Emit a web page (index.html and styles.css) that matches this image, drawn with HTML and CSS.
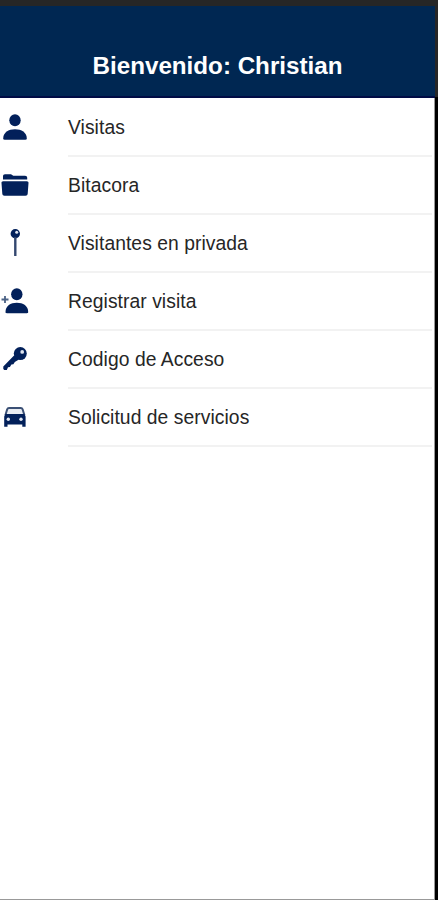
FILE: index.html
```html
<!DOCTYPE html>
<html lang="es">
<head>
    <meta charset="UTF-8">
    <meta name="viewport" content="width=device-width, initial-scale=1.0">
    <title>Bienvenido</title>
    <link rel="stylesheet" href="styles.css">
</head>
<body>
<div class="device">
    <div class="screen">
        <header class="header">
            <h1>Bienvenido: Christian</h1>
        </header>

        <ul class="menu">
            <li class="menu-item">
                <svg class="icon" viewBox="0 0 30 30">
                    <ellipse cx="15" cy="8.3" rx="5.7" ry="6"/>
                    <path d="M3.2 26.5C3.2 20.5 8.5 17.3 15 17.3s11.8 3.2 11.8 9.2c0 .8-.5 1.2-1.3 1.2h-21c-.8 0-1.3-.4-1.3-1.2z"/>
                </svg>
                <span class="label">Visitas</span>
            </li>
            <li class="menu-item">
                <svg class="icon" viewBox="0 0 30 30">
                    <path d="M3 9.4V6.2C3 4.9 3.8 4.2 5 4.2h6l2.3 1.6H25c1.4 0 2.2.8 2.2 2v1.6z"/>
                    <path d="M3.2 11.2h23.6c1.2 0 1.8.7 1.7 1.8l-.8 10.7c-.1 1.3-.9 2-2.2 2h-21c-1.3 0-2.1-.7-2.2-2L1.5 13c-.1-1.1.5-1.8 1.7-1.8z"/>
                </svg>
                <span class="label">Bitacora</span>
            </li>
            <li class="menu-item">
                <svg class="icon" viewBox="0 0 30 30">
                    <circle cx="15.3" cy="5.7" r="4.7"/>
                    <path class="stem" d="M15.3 9v19"/>
                    <circle class="hole" cx="16.7" cy="4.2" r="1.5"/>
                </svg>
                <span class="label">Visitantes en privada</span>
            </li>
            <li class="menu-item">
                <svg class="icon" viewBox="0 0 30 30">
                    <ellipse cx="16.8" cy="8.2" rx="5.7" ry="6"/>
                    <path d="M5.5 26C5.5 20 10.5 16.8 16.8 16.8S28.2 20 28.2 26c0 .8-.5 1.2-1.3 1.2H6.8c-.8 0-1.3-.4-1.3-1.2z"/>
                    <path class="plus" d="M5 10v7M1.500 13.500h7"/>
                </svg>
                <span class="label">Registrar visita</span>
            </li>
            <li class="menu-item">
                <svg class="icon" viewBox="0 0 30 30">
                    <circle cx="20.3" cy="9.6" r="6.5"/>
                    <path d="M14.300 11.300L3.300 22.600v2.500l1 .8h2.500l1.200-2.700 1.900-.3 1.500-2.400 2-.2 1.400-2.300 3.700-2.300z"/>
                    <circle class="hole" cx="22.200" cy="7.900" r="1.900"/>
                </svg>
                <span class="label">Codigo de Acceso</span>
            </li>
            <li class="menu-item">
                <svg class="icon" viewBox="0 0 30 30">
                    <path class="roof" d="M5.300 13.500L7.200 7.200C7.500 6.300 8 5.900 9 5.900h11.800c1 0 1.500.4 1.800 1.300l1.900 6.300"/>
                    <path d="M5.500 12h18.800l1.300 2.500v10.300h-3.300v-2.300H7.500v2.300H4.200V14.500z"/>
                    <circle class="hole" cx="8.300" cy="17.300" r="1.700"/>
                    <circle class="hole" cx="21" cy="17.300" r="1.700"/>
                </svg>
                <span class="label">Solicitud de servicios</span>
            </li>
        </ul>
    </div>
</div>
</body>
</html>
```
FILE: styles.css
```css
* {
    margin: 0;
    padding: 0;
    box-sizing: border-box;
}

body {
    background: #000;
    font-family: 'Liberation Sans', Arial, sans-serif;
}

.device {
    height: 900px;
    padding-right: 3px;
    border-top: 6px solid #262626;
    background: linear-gradient(#262626 91px, #000 91px);
}

.screen {
    display: flex;
    flex-direction: column;
    height: 100%;
    background: #fff;
    border-right: 1px solid #999;
    border-bottom: 1px solid #999;
}

.header {
    height: 92px;
    margin-right: -1px;
    padding-top: 46px;
    background: #002752;
    border-bottom: 2px solid #000b45;
    text-align: center;
}

.header h1 {
    color: #fff;
    font-size: 24.2px;
    line-height: 28px;
}

.menu {
    margin-top: 1px;
    list-style: none;
}

.menu-item {
    display: flex;
    align-items: center;
    height: 58px;
    padding-right: 2px;
}

.icon {
    flex: none;
    width: 30px;
    height: 30px;
    margin-right: 38px;
    margin-bottom: 2px;
    fill: #02205a;
}

.icon .hole {
    fill: #dfe5f0;
}

.icon .stem {
    stroke: #33476f;
    stroke-width: 2.4;
}

.icon .plus {
    stroke: #4b6285;
    stroke-width: 1.8;
}

.icon .roof {
    fill: #e8ecf2;
    stroke: #3b5075;
    stroke-width: 2;
}

.label {
    flex: 1;
    height: 58px;
    border-bottom: 2px solid #f2f2f2;
    color: #262626;
    font-size: 19.3px;
    letter-spacing: 0.06px;
    line-height: 57px;
}
```
